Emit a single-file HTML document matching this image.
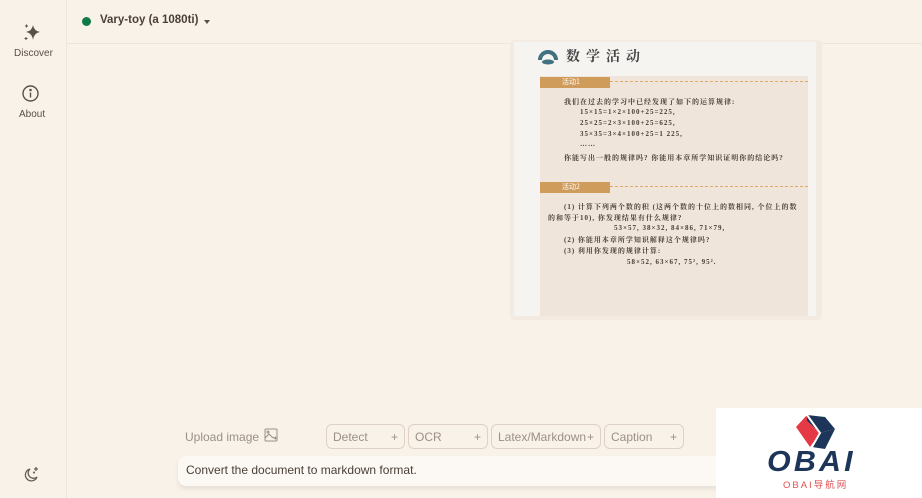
<!DOCTYPE html>
<html><head><meta charset="utf-8"><style>
*{margin:0;padding:0;box-sizing:border-box}
body{width:922px;height:498px;background:#f9f2e9;font-family:"Liberation Sans",sans-serif;position:relative;overflow:hidden;color:#4a4038}
.side{position:absolute;left:0;top:0;width:67px;height:498px;border-right:1px solid #efe6da}
.hdr{position:absolute;left:67px;top:0;right:0;height:44px;border-bottom:1px solid #efe6da}
.t{position:absolute;font-size:10px;color:#5a5048}
.cn{font-family:"Liberation Serif","Noto Serif CJK SC",serif;position:absolute;font-size:7px;color:#4a4038;white-space:nowrap;letter-spacing:1px;font-weight:bold}
.chip{position:absolute;top:424px;height:25px;border:1px solid #ddd2c5;border-radius:6px;font-size:12px;color:#9a9088;padding:5px 6px;background:#f9f2e9}
.chip span{position:absolute;right:6px;top:5px}
</style></head><body>
<div class="side">
<svg style="position:absolute;left:22px;top:23px" width="20" height="20" viewBox="0 0 20 20" fill="#5a5048"><path d="M11 2 Q12 8 18 9 Q12 10 11 17 Q10 10 4 9 Q10 8 11 2Z"/><path d="M4 1.5h1v3h-1zM3 2.5h3v1h-3zM3.5 14h1v3h-1zM2.5 15h3v1h-3z"/></svg>
<div class="t" style="left:14px;top:48px">Discover</div>
<svg style="position:absolute;left:22px;top:85px" width="17" height="17" viewBox="0 0 17 17" fill="none" stroke="#5a5048" stroke-width="1.4"><circle cx="8.5" cy="8.5" r="7.5"/><path d="M8.5 7.5v5"/><circle cx="8.5" cy="5" r=".6" fill="#5a5048"/></svg>
<div class="t" style="left:19px;top:109px">About</div>
<svg style="position:absolute;left:23px;top:465px" width="18" height="18" viewBox="0 0 18 18" fill="none" stroke="#6a6058" stroke-width="1.3"><path d="M7 4 A6 6 0 1 0 14 12 A5 5 0 0 1 7 4Z"/><path d="M13 2v4M11 4h4M10 7.5h2M11 6.5v2"/></svg>
</div>
<div class="hdr">
<div style="position:absolute;left:15px;top:17px;width:9px;height:9px;border-radius:50%;background:#0f7a46"></div>
<div style="position:absolute;left:33px;top:14px;font-size:11.5px;font-weight:bold;color:#4a4038">Vary-toy (a 1080ti)</div>
<div style="position:absolute;left:137px;top:20px;border:3px solid transparent;border-top:4px solid #5a5048"></div>
</div>
<div style="position:absolute;left:510px;top:40px;width:312px;height:280px;background:#f3ebe1;border-radius:4px"></div>
<div style="position:absolute;left:514px;top:42px;width:302px;height:274px;background:#f6f4f1"></div>
<div style="position:absolute;left:540px;top:76px;width:268px;height:240px;background:#efe5da"></div>
<svg style="position:absolute;left:538px;top:48px" width="20" height="18"><path d="M2 12 A8 8 0 0 1 18 12" stroke="#3f7180" stroke-width="4" fill="none"/><ellipse cx="10" cy="14" rx="6" ry="2.5" fill="#3f7180"/></svg>
<div style="position:absolute;left:566px;top:46px;font-size:14px;letter-spacing:6px;font-family:'Noto Serif CJK SC',serif;font-weight:bold;color:#444">数学活动</div>
<div style="position:absolute;left:540px;top:77px;width:70px;height:11px;background:#cf9c5c;color:#fff;font-size:7px;padding-left:22px;font-family:'Noto Sans CJK SC',sans-serif;line-height:11px">活动1</div>
<div style="position:absolute;left:610px;top:81px;width:198px;border-top:1px dashed #e0a868"></div>
<div style="position:absolute;left:540px;top:182px;width:70px;height:11px;background:#cf9c5c;color:#fff;font-size:7px;padding-left:22px;font-family:'Noto Sans CJK SC',sans-serif;line-height:11px">活动2</div>
<div style="position:absolute;left:610px;top:186px;width:198px;border-top:1px dashed #e0a868"></div>
<div class="cn" style="left:564px;top:97px">我们在过去的学习中已经发现了如下的运算规律:</div>
<div class="cn" style="left:580px;top:108px">15×15=1×2×100+25=225,</div>
<div class="cn" style="left:580px;top:119px">25×25=2×3×100+25=625,</div>
<div class="cn" style="left:580px;top:130px">35×35=3×4×100+25=1 225,</div>
<div class="cn" style="left:580px;top:140px">……</div>
<div class="cn" style="left:564px;top:153px">你能写出一般的规律吗? 你能用本章所学知识证明你的结论吗?</div>
<div class="cn" style="left:564px;top:202px">(1) 计算下列两个数的积 (这两个数的十位上的数相同, 个位上的数</div>
<div class="cn" style="left:548px;top:213px">的和等于10), 你发现结果有什么规律?</div>
<div class="cn" style="left:614px;top:224px">53×57, 38×32, 84×86, 71×79,</div>
<div class="cn" style="left:564px;top:235px">(2) 你能用本章所学知识解释这个规律吗?</div>
<div class="cn" style="left:564px;top:246px">(3) 利用你发现的规律计算:</div>
<div class="cn" style="left:627px;top:258px">58×52, 63×67, 75², 95².</div>
<div style="position:absolute;left:185px;top:430px;font-size:12px;color:#9a9088">Upload image</div>
<svg style="position:absolute;left:264px;top:428px" width="14" height="14" fill="none" stroke="#9a9088" stroke-width="1"><rect x="1" y="1" width="12" height="12" rx="1"/><path d="M1 10l4-4 4 4M9 9l2 2M10 10h3M11.5 8.5v3"/><circle cx="4" cy="4" r="1"/></svg>
<div class="chip" style="left:326px;width:79px">Detect<span>+</span></div>
<div class="chip" style="left:408px;width:80px">OCR<span>+</span></div>
<div class="chip" style="left:491px;width:110px">Latex/Markdown<span>+</span></div>
<div class="chip" style="left:604px;width:80px">Caption<span>+</span></div>
<div style="position:absolute;left:178px;top:456px;width:560px;height:30px;background:#fcf8f3;border-radius:8px;box-shadow:0 3px 5px rgba(0,0,0,.08);font-size:12px;padding:7px 8px;color:#4a4038">Convert the document to markdown format.</div>
<div style="position:absolute;left:716px;top:408px;width:206px;height:90px;background:#fff"></div>
<svg style="position:absolute;left:792px;top:413px" width="46" height="40"><polygon points="15,2 33,4 43,16 28,20 15,8" fill="#1d3558"/><polygon points="4,14 15,2 15,8 28,20 18,34" fill="#e63946"/><polygon points="28,20 43,16 33,36 20,34" fill="#1d3558"/><polyline points="15,2 28,20 20,34" stroke="#fff" stroke-width="2" fill="none"/></svg>
<div style="position:absolute;left:767px;top:447px;font-size:29px;font-weight:bold;font-style:italic;color:#1d3558;letter-spacing:3px;line-height:30px;transform:scaleX(1.05);transform-origin:left">OBAI</div>
<div style="position:absolute;left:783px;top:477px;font-size:9.5px;color:#e05050;letter-spacing:2px;font-family:'Liberation Sans','Noto Sans CJK SC',sans-serif">OBAI导航网</div>
</body></html>
